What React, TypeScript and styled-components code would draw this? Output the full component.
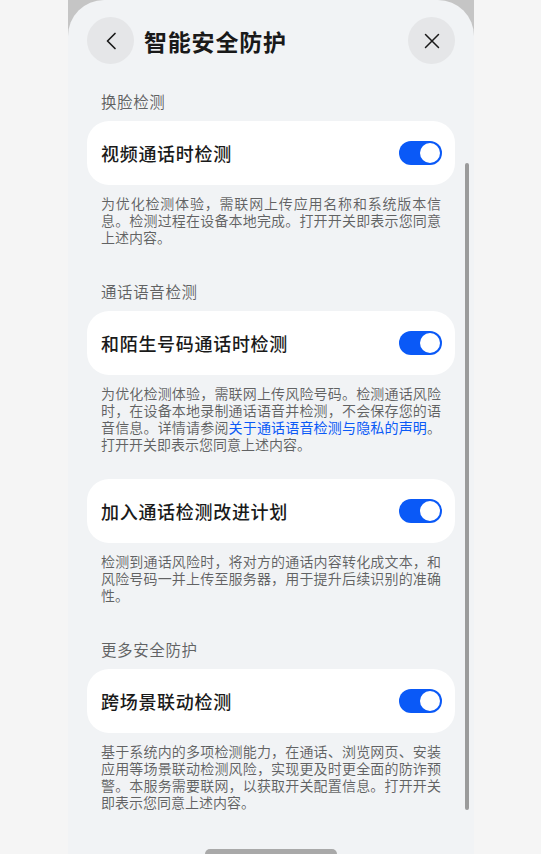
import React from "react";
import styled, { createGlobalStyle } from "styled-components";

const GlobalStyle = createGlobalStyle`
  html, body {
    margin: 0;
    padding: 0;
    background: #f5f5f5;
    font-family: "Noto Sans CJK SC", sans-serif;
  }
`;

const Page = styled.div`
  height: 854px;
  padding-left: 68px;
  overflow: hidden;
  font-family: "Noto Sans CJK SC", sans-serif;
`;

const Backdrop = styled.div`
  width: 406px;
  height: 854px;
  background: #c5c5c5;
`;

const Sheet = styled.div`
  position: relative;
  height: 854px;
  box-sizing: border-box;
  padding: 17px 19px 0;
  background: #f1f3f5;
  border-radius: 36px 36px 0 0;
  overflow: hidden;
`;

const Header = styled.div`
  display: flex;
  align-items: center;
  height: 47px;
`;

const RoundButton = styled.button`
  display: flex;
  align-items: center;
  justify-content: center;
  width: 47px;
  height: 47px;
  padding: 0;
  border: none;
  border-radius: 50%;
  background: #e5e6e8;
  color: #1a1a1a;
  flex-shrink: 0;
`;

const Title = styled.h1`
  flex: 1;
  margin: 0 0 0 10px;
  font-size: 23px;
  font-weight: 700;
  letter-spacing: 0.8px;
  color: #191919;
  line-height: 30px;
`;

const Section = styled.section<{ $gap: number }>`
  margin-top: ${(p) => p.$gap}px;
`;

const Label = styled.div`
  padding: 0 14px;
  margin-bottom: 10px;
  font-size: 15.5px;
  line-height: 20px;
  letter-spacing: 0.6px;
  color: rgba(0, 0, 0, 0.6);
`;

const Card = styled.div`
  display: flex;
  align-items: center;
  justify-content: space-between;
  height: 64px;
  padding: 0 13px 0 14px;
  background: #ffffff;
  border-radius: 22px;
`;

const CardTitle = styled.span`
  font-size: 18px;
  font-weight: 500;
  letter-spacing: 0.7px;
  color: #1a1a1a;
`;

const Toggle = styled.div<{ $on: boolean }>`
  position: relative;
  width: 43px;
  height: 24px;
  border-radius: 12px;
  background: ${(p) => (p.$on ? "#0a59f7" : "#d3d5d8")};

  &::after {
    content: "";
    position: absolute;
    top: 2px;
    ${(p) => (p.$on ? "right: 2px;" : "left: 2px;")}
    width: 20px;
    height: 20px;
    border-radius: 50%;
    background: #ffffff;
  }
`;

const Desc = styled.div`
  margin-top: 10px;
  padding: 0 14px;
  font-size: 14px;
  line-height: 17px;
  color: rgba(0, 0, 0, 0.6);
`;

const Line = styled.div<{ $last?: boolean }>`
  white-space: nowrap;
  text-align: ${(p) => (p.$last ? "left" : "justify")};
  text-align-last: ${(p) => (p.$last ? "left" : "justify")};
`;

const Link = styled.span`
  color: #0a59f7;
`;

const ScrollBar = styled.div`
  position: absolute;
  top: 163px;
  right: 5px;
  width: 4px;
  height: 647px;
  border-radius: 2px;
  background: #9b9b9b;
`;

const HomeBar = styled.div`
  position: absolute;
  left: 50%;
  bottom: -5px;
  width: 132px;
  height: 10px;
  margin-left: -66px;
  border-radius: 5px;
  background: #a9a9a9;
`;

type Item = {
  label?: string;
  gap: number;
  title: string;
  lines: React.ReactNode[];
};

const items: Item[] = [
  {
    label: "换脸检测",
    gap: 27,
    title: "视频通话时检测",
    lines: [
      "为优化检测体验，需联网上传应用名称和系统版本信",
      "息。检测过程在设备本地完成。打开开关即表示您同意",
      "上述内容。",
    ],
  },
  {
    label: "通话语音检测",
    gap: 35,
    title: "和陌生号码通话时检测",
    lines: [
      "为优化检测体验，需联网上传风险号码。检测通话风险",
      "时，在设备本地录制通话语音并检测，不会保存您的语",
      <>
        音信息。详情请参阅<Link>关于通话语音检测与隐私的声明</Link>。
      </>,
      "打开开关即表示您同意上述内容。",
    ],
  },
  {
    gap: 26,
    title: "加入通话检测改进计划",
    lines: [
      "检测到通话风险时，将对方的通话内容转化成文本，和",
      "风险号码一并上传至服务器，用于提升后续识别的准确",
      "性。",
    ],
  },
  {
    label: "更多安全防护",
    gap: 35,
    title: "跨场景联动检测",
    lines: [
      "基于系统内的多项检测能力，在通话、浏览网页、安装",
      "应用等场景联动检测风险，实现更及时更全面的防诈预",
      "警。本服务需要联网，以获取开关配置信息。打开开关",
      "即表示您同意上述内容。",
    ],
  },
];

const BackIcon = () => (
  <svg width="16" height="18" viewBox="0 0 16 18" fill="none">
    <path d="M12 1.5L4.5 9L12 16.5" stroke="currentColor" strokeWidth="1.7" strokeLinecap="round" strokeLinejoin="round" />
  </svg>
);

const CloseIcon = () => (
  <svg width="16" height="16" viewBox="0 0 16 16" fill="none">
    <path d="M1.5 1.5L14.5 14.5M14.5 1.5L1.5 14.5" stroke="currentColor" strokeWidth="1.5" strokeLinecap="round" />
  </svg>
);

export default function App() {
  return (
    <Page lang="zh-CN">
      <GlobalStyle />
      <Backdrop>
        <Sheet>
          <Header>
            <RoundButton aria-label="返回">
              <BackIcon />
            </RoundButton>
            <Title>智能安全防护</Title>
            <RoundButton aria-label="关闭">
              <CloseIcon />
            </RoundButton>
          </Header>

          {items.map((item) => (
            <Section key={item.title} $gap={item.gap}>
              {item.label && <Label>{item.label}</Label>}
              <Card>
                <CardTitle>{item.title}</CardTitle>
                <Toggle $on={true} />
              </Card>
              <Desc>
                {item.lines.map((line, i) => (
                  <Line key={i} $last={i === item.lines.length - 1}>
                    {line}
                  </Line>
                ))}
              </Desc>
            </Section>
          ))}

          <ScrollBar />
          <HomeBar />
        </Sheet>
      </Backdrop>
    </Page>
  );
}
